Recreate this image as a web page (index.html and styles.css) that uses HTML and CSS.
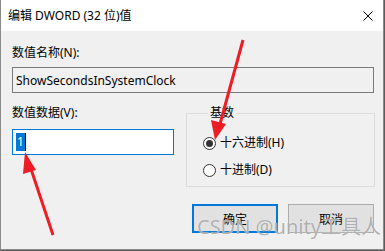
FILE: index.html
```html
<!DOCTYPE html>
<html lang="zh-CN">
<head>
  <meta charset="UTF-8">
  <title>编辑 DWORD (32 位)值</title>
  <link rel="stylesheet" href="styles.css">
</head>
<body>
  <div class="window">
    <div class="titlebar">
      <span class="title">编辑 DWORD (32 位)值</span>
      <svg class="close" width="10" height="10" viewBox="0 0 10 10">
        <path d="M0.5 0.5 L9.5 9.5 M9.5 0.5 L0.5 9.5" stroke="#000" stroke-width="1"/>
      </svg>
    </div>

    <div class="content">
      <div class="label">数值名称(N):</div>
      <div class="field readonly">ShowSecondsInSystemClock</div>

      <div class="row">
        <div class="data-col">
          <div class="label">数值数据(V):</div>
          <div class="field edit"><span class="selected">1</span><span class="caret"></span></div>
        </div>

        <fieldset class="base">
          <legend>基数</legend>
          <label class="radio"><span class="dot checked"></span>十六进制(H)</label>
          <label class="radio"><span class="dot"></span>十进制(D)</label>
        </fieldset>
      </div>

      <div class="buttons">
        <button class="btn default">确定</button>
        <button class="btn">取消</button>
      </div>
    </div>

    <div class="watermark">CSDN @unity工具人</div>

    <!-- red annotation arrows drawn over the dialog -->
    <svg class="arrows" width="385" height="251" viewBox="0 0 385 251">
      <line x1="243" y1="40" x2="220" y2="124" stroke="#ee1c25" stroke-width="3"/>
      <polygon points="215,140 211,120 226,124" fill="#ee1c25"/>
      <line x1="53" y1="235" x2="30" y2="166" stroke="#ee1c25" stroke-width="3"/>
      <polygon points="25,152 23,174 36,170" fill="#ee1c25"/>
    </svg>
  </div>
</body>
</html>
```

FILE: styles.css
```css
body {
  margin: 0;
  background-color: #5c5c5c;
  font-family: "Noto Sans", "Noto Sans CJK SC", sans-serif;
  font-size: 12px;
  color: #000;
}

.window {
  position: relative;
  width: 382px;
  height: 249px;
  background-color: #f0f0f0;
  border-left: 1px solid #8a8a8a;
  border-right: 1px solid #8a8a8a;
  border-bottom: 1px solid #8a8a8a;
  overflow: hidden;
}

.titlebar {
  height: 31px;
  background-color: #fff;
  display: flex;
  align-items: center;
  justify-content: space-between;
  padding: 0 8px 0 7px;
}

.title {
  font-size: 12px;
  line-height: 16px;
}

.close {
  display: block;
  margin-right: 2px;
}

.content {
  padding: 14px 8px 0 11px;
}

.label {
  line-height: 16px;
  height: 16px;
}

.field {
  box-sizing: border-box;
  height: 26px;
  margin-top: 6px;
  padding: 0 3px;
  display: flex;
  align-items: center;
  border: 1px solid #7a7a7a;
}

.readonly {
  width: 362px;
  background-color: #f0f0f0;
}

.row {
  display: flex;
  gap: 12px;
  margin-top: 12px;
}

.data-col .field {
  margin-top: 8px;
}

.edit {
  width: 162px;
  background-color: #fff;
  border-color: #0078d7;
}

.selected {
  display: inline-block;
  background-color: #0078d7;
  color: #fff;
  height: 18px;
  line-height: 18px;
  padding: 0 1px;
}

.caret {
  display: inline-block;
  width: 1px;
  height: 18px;
  background-color: #000;
}

.base {
  box-sizing: border-box;
  width: 189px;
  height: 82px;
  margin: 0;
  padding: 14px 0 0 16px;
  border: 1px solid #dcdcdc;
  display: flex;
  flex-direction: column;
  gap: 11px;
  min-width: 0;
}

.base legend {
  padding: 0 2px;
  margin-left: 5px;
  line-height: 16px;
}

.radio {
  display: flex;
  align-items: center;
  gap: 4px;
  line-height: 16px;
}

.dot {
  box-sizing: border-box;
  width: 13px;
  height: 13px;
  border: 1px solid #333;
  border-radius: 50%;
  background-color: #fff;
  display: flex;
  align-items: center;
  justify-content: center;
}

.dot.checked::after {
  content: "";
  width: 7px;
  height: 7px;
  border-radius: 50%;
  background-color: #333;
}

.buttons {
  display: flex;
  justify-content: flex-end;
  gap: 10px;
  margin-top: 17px;
  padding-right: 1px;
}

.btn {
  box-sizing: border-box;
  width: 86px;
  height: 29px;
  font-family: inherit;
  font-size: 12px;
  color: #000;
  background-color: #e1e1e1;
  border: 1px solid #adadad;
  padding: 0;
}

.btn.default {
  border: 2px solid #0078d7;
}

.watermark {
  position: absolute;
  left: 196px;
  top: 214px;
  font-size: 20px;
  line-height: 26px;
  color: rgba(110, 110, 110, 0.55);
  text-shadow: 0 0 1px #fff;
  white-space: nowrap;
}

.arrows {
  position: absolute;
  left: -1px;
  top: 0;
}
```
